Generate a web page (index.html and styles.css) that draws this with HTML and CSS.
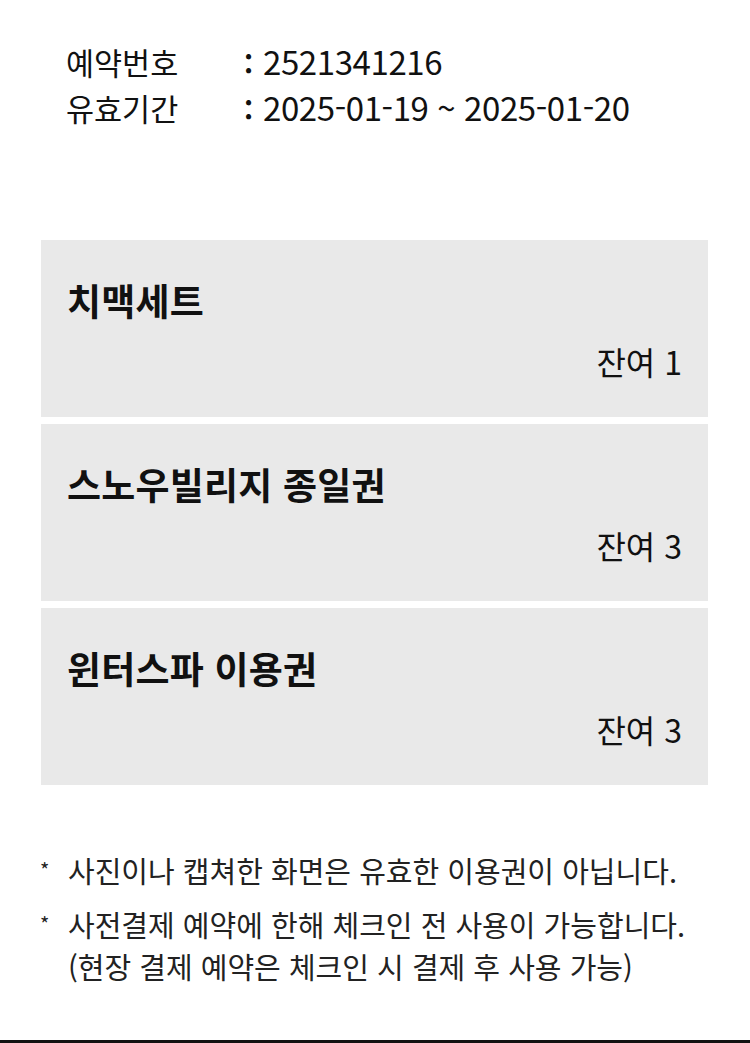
FILE: index.html
```html
<!DOCTYPE html>
<html lang="ko">
<head>
<meta charset="utf-8">
<link rel="stylesheet" href="styles.css">
</head>
<body>
<div class="page">
  <div class="info">
    <div class="row"><span class="label">예약번호</span><span class="colon">:</span><span class="value">2521341216</span></div>
    <div class="row"><span class="label">유효기간</span><span class="colon">:</span><span class="value">2025-01-19 ~ 2025-01-20</span></div>
  </div>
  <div class="cards">
    <div class="card"><div class="title">치맥세트</div><div class="remain">잔여 1</div></div>
    <div class="card"><div class="title">스노우빌리지 종일권</div><div class="remain">잔여 3</div></div>
    <div class="card"><div class="title">윈터스파 이용권</div><div class="remain">잔여 3</div></div>
  </div>
  <div class="notes">
    <div class="note"><span class="star">*</span><span class="ntext">사진이나 캡쳐한 화면은 유효한 이용권이 아닙니다.</span></div>
    <div class="note"><span class="star">*</span><span class="ntext">사전결제 예약에 한해 체크인 전 사용이 가능합니다.<br>(현장 결제 예약은 체크인 시 결제 후 사용 가능)</span></div>
  </div>
  <div class="spacer"></div>
  <div class="bottombar"></div>
</div>
</body>
</html>
```
FILE: styles.css
```css
html, body {
  margin: 0;
  padding: 0;
  background: #fff;
}
body {
  font-family: "Noto Sans CJK KR", "Noto Sans", sans-serif;
  color: #111;
}
.page {
  width: 750px;
  height: 1043px;
  display: flex;
  flex-direction: column;
  overflow: hidden;
}
.info {
  padding: 38px 0 0 66px;
  display: flex;
  flex-direction: column;
}
.row {
  display: flex;
  align-items: baseline;
  height: 46px;
  font-size: 30.5px;
  line-height: 46px;
}
.label {
  width: 178px;
}
.colon {
  width: 19px;
  font-size: 28px;
  font-weight: 700;
}
.value {
  font-size: 33px;
  letter-spacing: -0.4px;
}
.cards {
  margin: 110px 42px 0 41px;
  display: flex;
  flex-direction: column;
  gap: 7px;
}
.card {
  background: #e9e9e9;
  height: 177px;
  box-sizing: border-box;
  padding: 34px 26px 0 26px;
  display: flex;
  flex-direction: column;
}
.title {
  font-size: 37px;
  font-weight: 700;
  line-height: 52px;
  letter-spacing: 0.2px;
}
.remain {
  text-align: right;
  font-size: 32px;
  line-height: 44px;
  margin-top: 13px;
}
.notes {
  margin: 64px 0 0 40px;
  display: flex;
  flex-direction: column;
  gap: 12px;
}
.note {
  display: flex;
  font-size: 29px;
  line-height: 42px;
  color: #222;
}
.ntext {
  letter-spacing: 0;
}
.star {
  width: 28px;
  font-size: 20px;
}
.spacer {
  flex: 1;
}
.bottombar {
  height: 3px;
  background: #111;
}
```
